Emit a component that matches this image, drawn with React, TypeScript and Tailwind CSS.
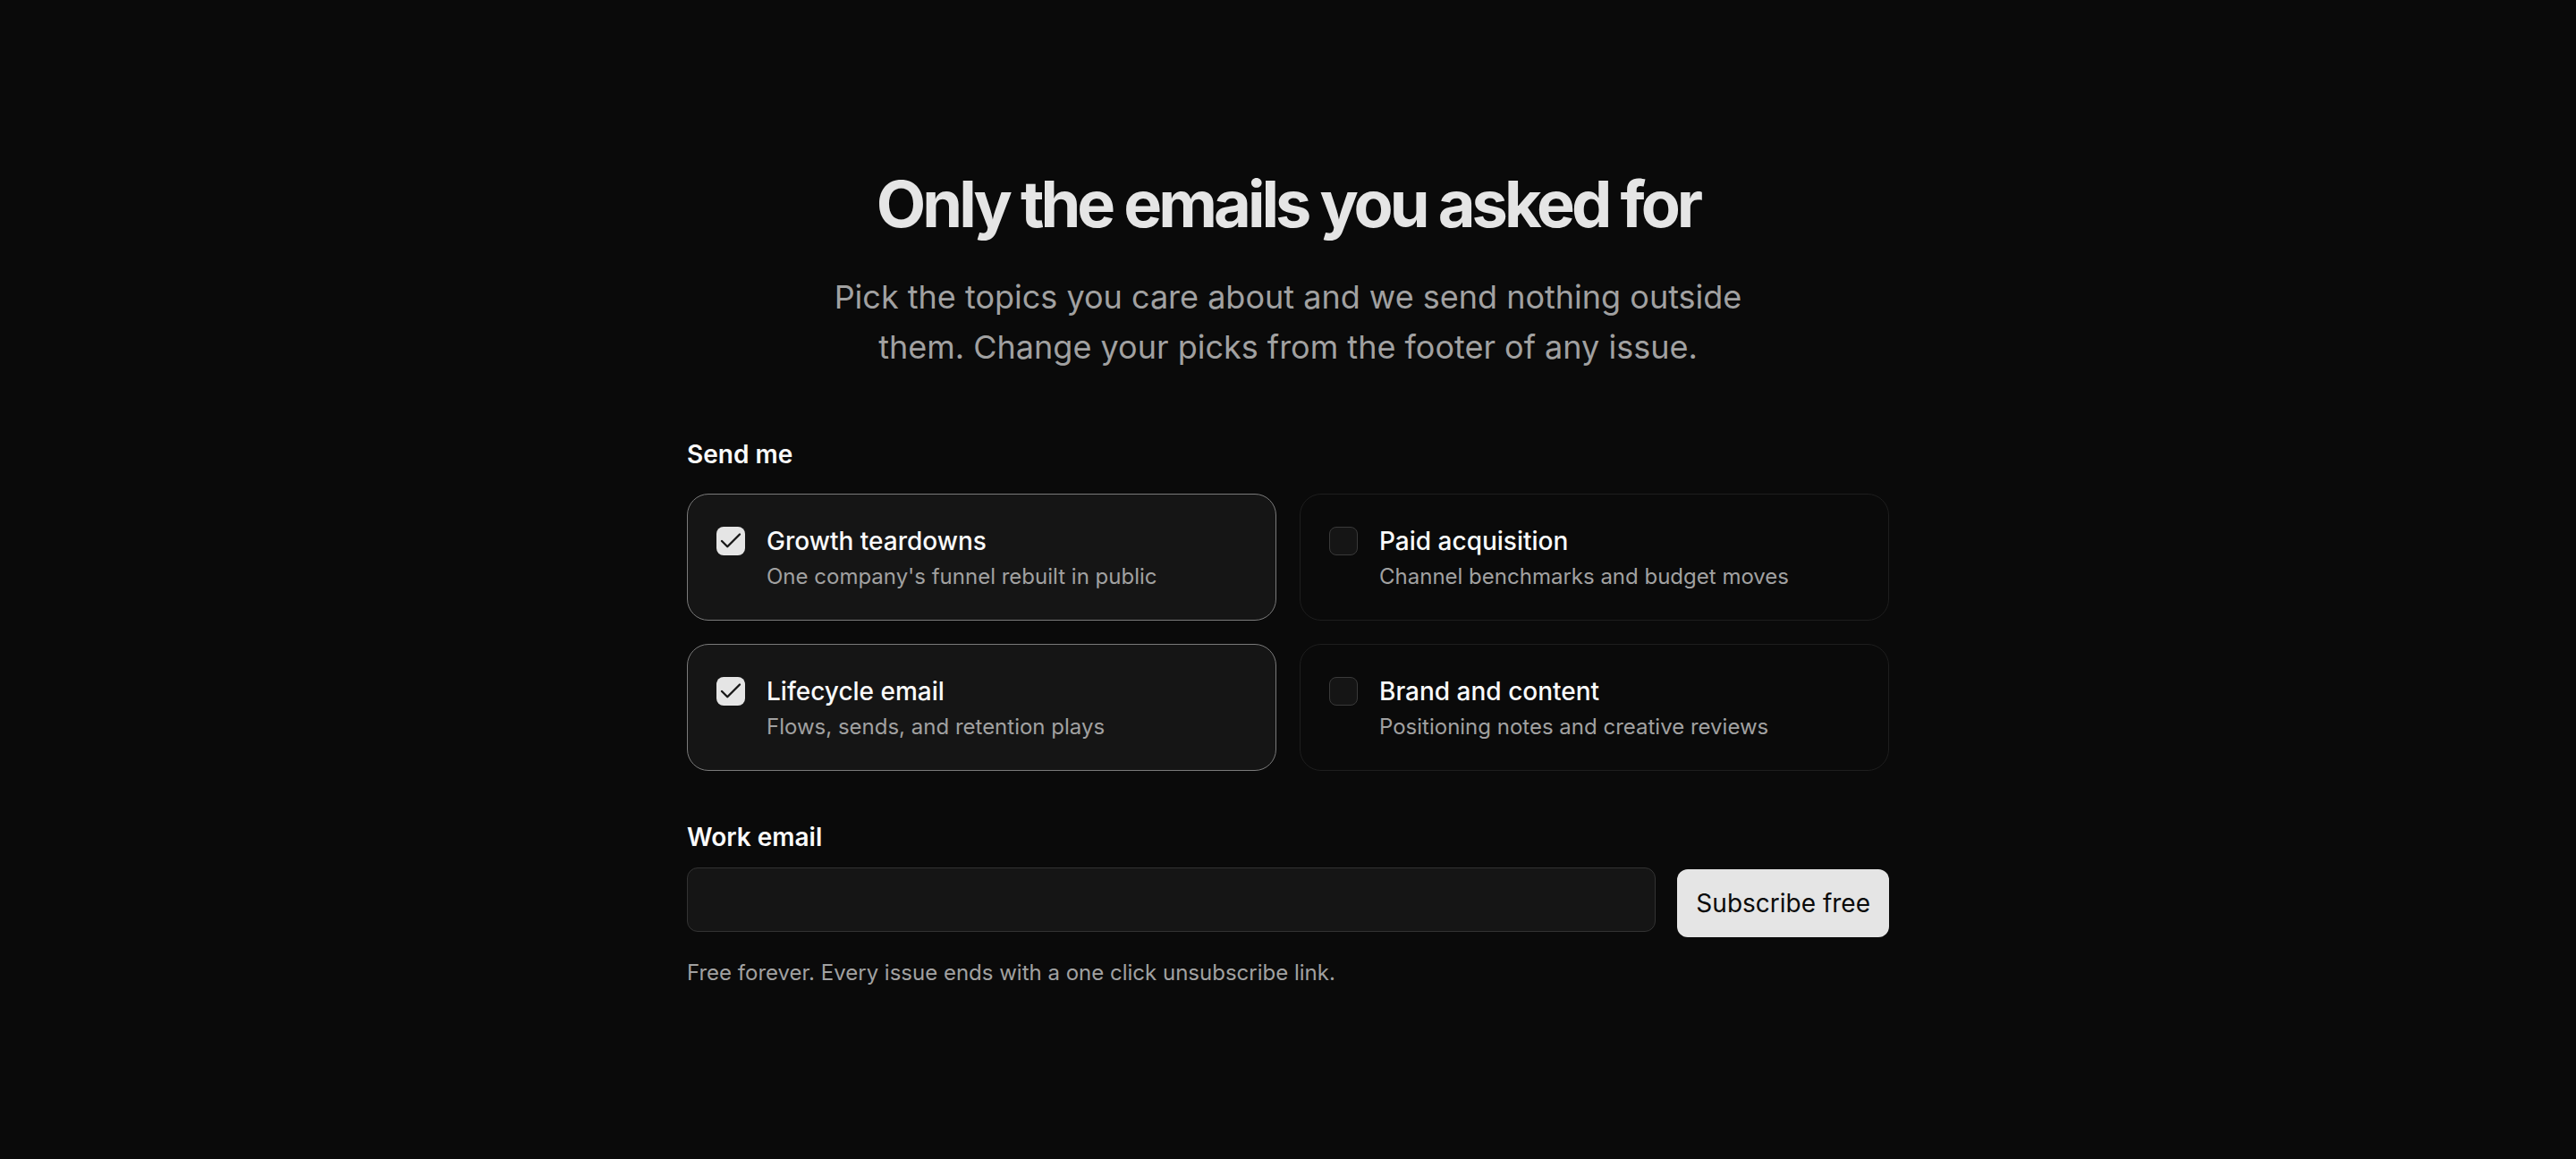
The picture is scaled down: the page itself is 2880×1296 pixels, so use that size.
import React, { useState } from "react";

type Topic = { id: string; title: string; desc: string };

const topics: Topic[] = [
  { id: "growth", title: "Growth teardowns", desc: "One company's funnel rebuilt in public" },
  { id: "paid", title: "Paid acquisition", desc: "Channel benchmarks and budget moves" },
  { id: "lifecycle", title: "Lifecycle email", desc: "Flows, sends, and retention plays" },
  { id: "brand", title: "Brand and content", desc: "Positioning notes and creative reviews" },
];

function CheckBox({ checked }: { checked: boolean }) {
  return checked ? (
    <span className="mt-[4px] flex size-[32px] shrink-0 items-center justify-center rounded-[8px] bg-neutral-200">
      <svg viewBox="0 0 24 24" className="size-[30px]" fill="none" stroke="#171717" strokeWidth="1.9" strokeLinecap="round" strokeLinejoin="round">
        <path d="M20 6 9 17l-5-5" />
      </svg>
    </span>
  ) : (
    <span className="mt-[4px] size-[32px] shrink-0 rounded-[8px] border border-[#3a3a3a] bg-[#151515]" />
  );
}

export default function App() {
  const [selected, setSelected] = useState<Record<string, boolean>>({ growth: true, lifecycle: true });

  return (
    <div className="flex min-h-screen justify-center bg-[#0a0a0a] pt-[188px] pb-[188px] font-[Inter,sans-serif] antialiased">
      <div className="w-[1344px]">
        <div className="text-center">
          <h1 className="text-[72px] font-bold leading-[80px] tracking-[-0.055em] text-neutral-200">Only the emails you asked for</h1>
          <p className="mx-auto mt-[36px] max-w-[1024px] text-[36px] leading-[56px] text-neutral-400">
            Pick the topics you care about and we send nothing outside them. Change your picks from the footer of any issue.
          </p>
        </div>

        <div className="mt-[72px]">
          <div className="text-[28px] font-semibold leading-[40px] text-neutral-50">Send me</div>
          <div className="mt-[24px] grid grid-cols-2 gap-[26px]">
            {topics.map((t) => {
              const on = !!selected[t.id];
              return (
                <button
                  key={t.id}
                  type="button"
                  onClick={() => setSelected((s) => ({ ...s, [t.id]: !s[t.id] }))}
                  className={
                    on
                      ? "flex items-start gap-[24px] rounded-[24px] border border-[#7a7a7a] bg-[#151515] p-[32px] text-left"
                      : "flex items-start gap-[24px] rounded-[24px] border border-[#1e1e1e] bg-[#0a0a0a] p-[32px] text-left"
                  }
                >
                  <CheckBox checked={on} />
                  <span className="flex flex-col">
                    <span className="text-[28px] font-medium leading-[40px] text-neutral-50">{t.title}</span>
                    <span className="mt-[4px] text-[24px] leading-[32px] text-neutral-400">{t.desc}</span>
                  </span>
                </button>
              );
            })}
          </div>
        </div>

        <div className="mt-[54px]">
          <label className="block text-[28px] font-semibold leading-[40px] text-neutral-50">Work email</label>
          <div className="mt-[14px] flex items-start gap-[24px]">
            <input
              type="email"
              className="h-[72px] flex-1 rounded-[12px] border border-[#333333] bg-[#151515] px-[24px] text-[28px] text-neutral-100 outline-none"
            />
            <button
              type="button"
              className="mt-[2px] h-[76px] rounded-[12px] bg-neutral-200 px-[21px] text-[28px] text-neutral-950"
            >
              Subscribe free
            </button>
          </div>
          <p className="mt-[24px] text-[24px] leading-[32px] text-neutral-400">
            Free forever. Every issue ends with a one click unsubscribe link.
          </p>
        </div>
      </div>
    </div>
  );
}
